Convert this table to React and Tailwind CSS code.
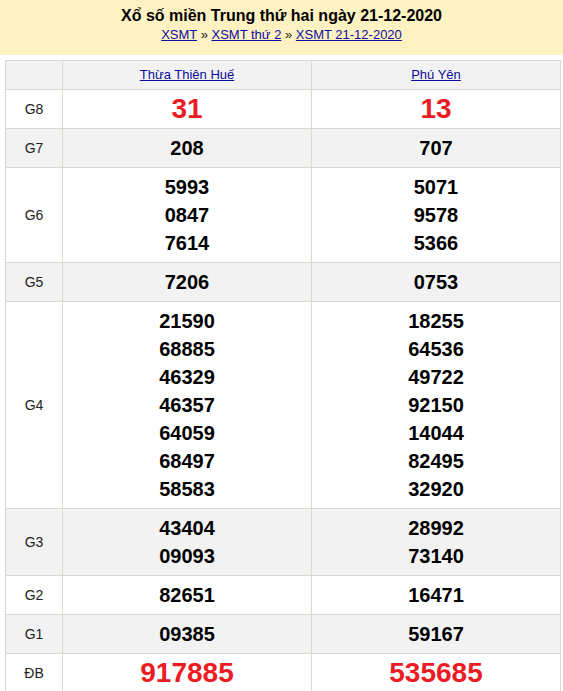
import React from "react";

const rows = [
  { label: "G8", a: ["31"], b: ["13"], big: true, gray: false },
  { label: "G7", a: ["208"], b: ["707"], gray: true },
  { label: "G6", a: ["5993", "0847", "7614"], b: ["5071", "9578", "5366"], gray: false },
  { label: "G5", a: ["7206"], b: ["0753"], gray: true },
  {
    label: "G4",
    a: ["21590", "68885", "46329", "46357", "64059", "68497", "58583"],
    b: ["18255", "64536", "49722", "92150", "14044", "82495", "32920"],
    gray: false,
  },
  { label: "G3", a: ["43404", "09093"], b: ["28992", "73140"], gray: true },
  { label: "G2", a: ["82651"], b: ["16471"], gray: false },
  { label: "G1", a: ["09385"], b: ["59167"], gray: true },
  { label: "ĐB", a: ["917885"], b: ["535685"], big: true, gray: false },
];

function Cell({ nums, big }) {
  return (
    <td className="border border-[#dcd7cf] py-[5px] text-center align-middle">
      {nums.map((n) => (
        <div
          key={n}
          className={
            big
              ? "text-[28px] leading-[28px] font-bold text-[#ec1c24]"
              : "text-[20px] leading-[28px] font-bold text-black"
          }
        >
          {n}
        </div>
      ))}
    </td>
  );
}

export default function App() {
  return (
    <div className="w-[563px] bg-white font-['Liberation_Sans',Arial,sans-serif]">
      <div className="bg-[#fff2c2] pt-[6px] pb-[11px] text-center">
        <div className="text-[16px] leading-[20px] font-bold text-black">
          Xổ số miền Trung thứ hai ngày 21-12-2020
        </div>
        <div className="text-[13px] leading-[18px] text-[#222]">
          <a className="text-[#0b0b9e] underline" href="#">XSMT</a>
          {" » "}
          <a className="text-[#0b0b9e] underline" href="#">XSMT thứ 2</a>
          {" » "}
          <a className="text-[#0b0b9e] underline" href="#">XSMT 21-12-2020</a>
        </div>
      </div>
      <div className="pt-[5px] pl-[5px]">
        <table className="w-[555px] border-collapse table-fixed">
          <colgroup>
            <col className="w-[57px]" />
            <col className="w-[249px]" />
            <col className="w-[249px]" />
          </colgroup>
          <thead>
            <tr className="bg-[#f2f2f2]">
              <th className="border border-[#dcd7cf] py-[5px] leading-[18px]"></th>
              <th className="border border-[#dcd7cf] py-[5px] text-[13px] leading-[18px] font-normal">
                <a className="text-[#0b0b9e] underline" href="#">Thừa Thiên Huế</a>
              </th>
              <th className="border border-[#dcd7cf] py-[5px] text-[13px] leading-[18px] font-normal">
                <a className="text-[#0b0b9e] underline" href="#">Phú Yên</a>
              </th>
            </tr>
          </thead>
          <tbody>
            {rows.map((r) => (
              <tr key={r.label} className={r.gray ? "bg-[#f2f2f2]" : "bg-white"}>
                <td className="border border-[#dcd7cf] py-[5px] text-center align-middle text-[14px] text-[#222]">
                  {r.label}
                </td>
                <Cell nums={r.a} big={r.big} />
                <Cell nums={r.b} big={r.big} />
              </tr>
            ))}
          </tbody>
        </table>
      </div>
    </div>
  );
}
